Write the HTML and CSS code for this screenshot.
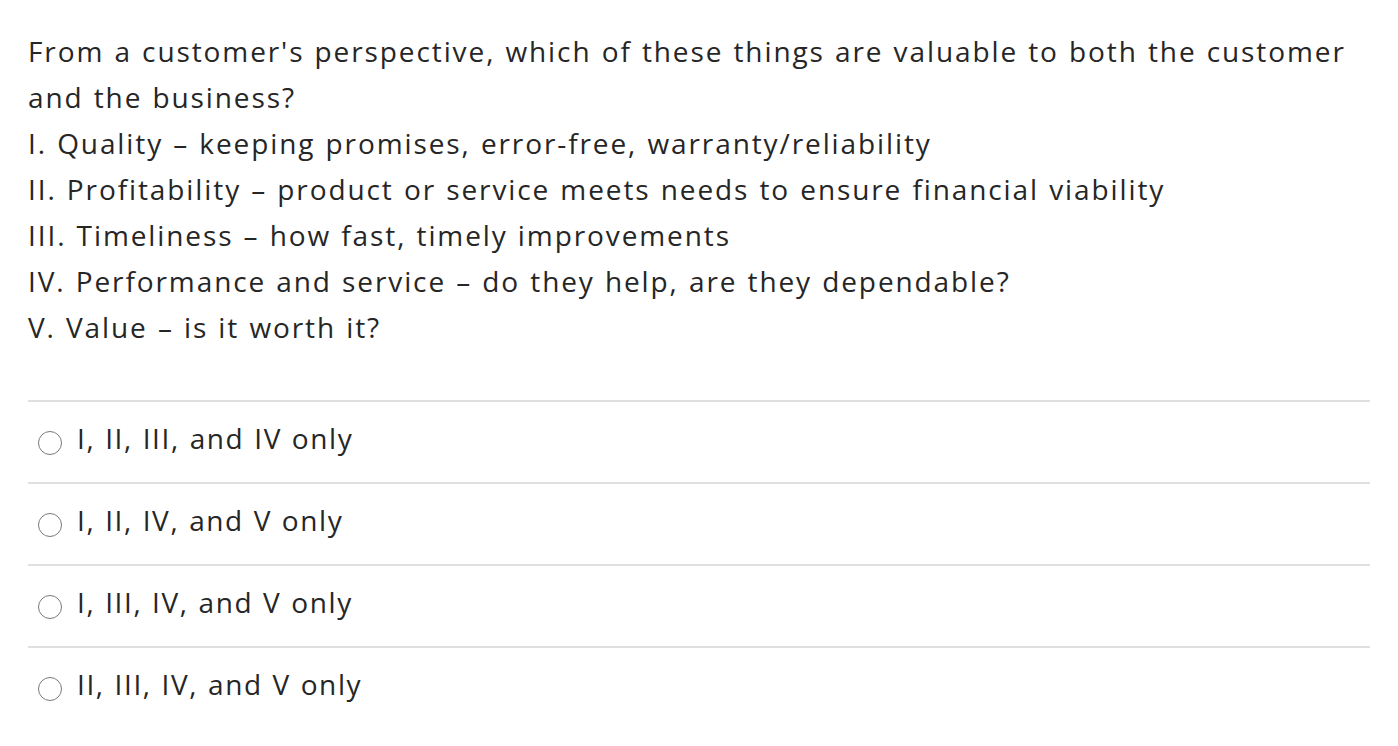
FILE: index.html
```html
<!DOCTYPE html>
<html>
<head>
<meta charset="utf-8">
<link rel="stylesheet" href="styles.css">
</head>
<body>
<div class="quiz">
  <div class="question">
    <p class="line">From a customer's perspective, which of these things are valuable to both the customer and the business?</p>
    <p class="line">I. Quality – keeping promises, error-free, warranty/reliability</p>
    <p class="line">II. Profitability – product or service meets needs to ensure financial viability</p>
    <p class="line">III. Timeliness – how fast, timely improvements</p>
    <p class="line">IV. Performance and service – do they help, are they dependable?</p>
    <p class="line">V. Value – is it worth it?</p>
  </div>
  <ul class="options">
    <li class="option"><span class="radio"></span><span class="label">I, II, III, and IV only</span></li>
    <li class="option"><span class="radio"></span><span class="label">I, II, IV, and V only</span></li>
    <li class="option"><span class="radio"></span><span class="label">I, III, IV, and V only</span></li>
    <li class="option"><span class="radio"></span><span class="label">II, III, IV, and V only</span></li>
  </ul>
</div>
</body>
</html>
```
FILE: styles.css
```css
html, body {
  margin: 0;
  padding: 0;
  background: #ffffff;
}
body {
  font-family: "Open Sans", Lato, sans-serif;
  color: #262626;
  letter-spacing: 1.9px;
  word-spacing: 1px;
}
.quiz {
  width: 1342px;
  padding: 28px 0 0 28px;
}
.question {
  font-size: 28px;
  line-height: 46px;
}
.line {
  margin: 0;
}
.options {
  list-style: none;
  margin: 50px 0 0 0;
  padding: 0;
}
.option {
  display: flex;
  align-items: center;
  gap: 15px;
  height: 80px;
  border-top: 2px solid #e0e0e0;
  padding-left: 10px;
  font-size: 28px;
  letter-spacing: 1.6px;
}
.radio {
  width: 22px;
  height: 22px;
  border: 1.7px solid #7a7a7a;
  border-radius: 50%;
  flex: none;
  margin-top: 2px;
}
.label {
  margin-top: -8px;
}
```
